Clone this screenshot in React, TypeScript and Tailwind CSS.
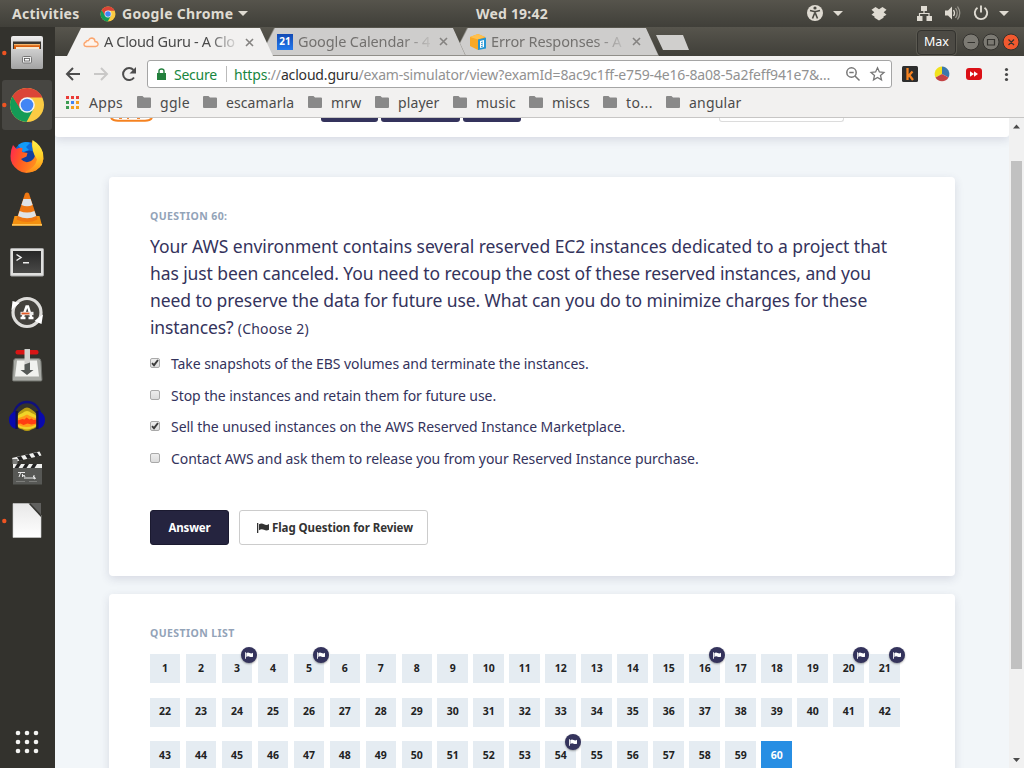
import React from "react";

function ChromeLogo({ cx, cy, r }: { cx: number; cy: number; r: number }) {
  return (
    <g transform={`translate(${cx} ${cy}) scale(${r / 17})`}>
      <circle r="17" fill="#fbcb43" />
      <path d="M0 0 L-14.7 -8.5 A17 17 0 0 1 15.4 -7.5 L0 -7.5 Z" fill="#db4437" />
      <path d="M-14.7 -8.5 A17 17 0 0 0 -.5 17 L6.5 4 L-7 3 Z" fill="#149b57" />
      <path d="M-14.7 -8.5 L-7 4 L0 -7.5 Z" fill="#db4437" />
      <path d="M-14.7 -8.5 L-6.5 4.5 L-8 9 L-16 4 Z" fill="#149b57" />
      <circle r="7.8" fill="#f4f4f4" />
      <circle r="6.3" fill="#4285f4" />
    </g>
  );
}

const dockIcons: { name: string; running?: boolean; active?: boolean; art: React.ReactNode }[] = [
  {
    name: "Files",
    running: true,
    art: (
      <g>
        <rect x="11" y="9" width="32" height="33" rx="2" fill="url(#metal)" />
        <rect x="13" y="14.500" width="28" height="8" fill="#3b3630" />
        <path d="M14 17h26v5H14z" fill="#d95f0e" />
        <path d="M14 17h26v1.300H14z" fill="#f3b56b" />
        <path d="M16 20h23v2H16z" fill="#f8e8d0" />
        <path d="M11 22h32v18q0 2-2 2H13q-2 0-2-2z" fill="url(#metal2)" />
        <rect x="22.500" y="29.500" width="9" height="6.500" rx="1" fill="#eee" stroke="#777" />
        <rect x="24.500" y="31.500" width="5" height="2.500" fill="#fff" stroke="#555" strokeWidth=".8" />
      </g>
    ),
  },
  { name: "Google Chrome", running: true, active: true, art: <ChromeLogo cx={27} cy={26} r={17} /> },
  {
    name: "Firefox",
    art: (
      <g transform="translate(0 1)">
        <circle cx="27.500" cy="24" r="14" fill="#0c6ad8" />
        <path d="M21 22q8-6 13-2l2 10-8 8-10-3z" fill="#123f9c" />
        <path d="M18 13q6-5 12-2l-4 4 3 3-6 2z" fill="#129bf5" />
        <path d="M13 13l3.500 4q3-2 6-1l-.5 4 5.500 1-1 3.500-5.500 2.500q4 5 10 2 5-3 4-9-4-6-3-11 7 3 11 12 2 12-7 17-10 6-18 0-8-6-7.500-14 0-6 2.500-11z" fill="url(#fox)" />
        <path d="M32.500 8q8.500 5 10.500 13 2 12-7 17.500-6 3-11 1 10-3 12-12-6-8-4.500-19.500z" fill="url(#foxTail)" />
      </g>
    ),
  },
  {
    name: "VLC",
    art: (
      <g transform="translate(0 -.5)">
        <path d="M14.500 33.500h25l2.500 9.500H12z" fill="#f49010" />
        <path d="M12 41.500h30v1.700H12z" fill="#ffc252" />
        <path d="M25 11q2-2 4 0l8.500 26q-10 5-21 0z" fill="#ee7712" />
        <path d="M23.400 16.500h7.200l2 6q-5.500 2.500-11.200 0z" fill="#dfe3e6" />
        <path d="M19.600 28.500q7.500 3 14.800 0l1.800 5q-9 4.500-18.200 0z" fill="#dfe3e6" />
      </g>
    ),
  },
  {
    name: "Terminal",
    art: (
      <g transform="translate(0 .5)">
        <rect x="10.500" y="13" width="33" height="27.500" rx="1" fill="#e0e0de" stroke="#aaa" />
        <rect x="13" y="15.500" width="28" height="22" fill="url(#term)" />
        <path d="M16.500 19l4.500 3-4.500 3M23 27.200h6" fill="none" stroke="#eee" strokeWidth="1.500" />
      </g>
    ),
  },
  {
    name: "Software Updater",
    art: (
      <g>
        <circle cx="27" cy="25.500" r="14" fill="#44423d" stroke="#deddda" strokeWidth="3.200" />
        <path d="M11.500 23l1-9 7 2-3.500 3zM43 27.500l-1.500 9.500-7-3 3.500-3z" fill="#fff" />
        <path d="M20.500 31h5M28.500 31h5M22.500 31l4-11.500h1.500L31.500 31" fill="none" stroke="#fff" strokeWidth="2.400" />
        <path d="M20.500 26.500h13" stroke="#ededed" strokeWidth="3.400" />
        <path d="M21.500 26.500h8" stroke="#e45b26" strokeWidth="1.800" />
      </g>
    ),
  },
  {
    name: "Transmission",
    art: (
      <g transform="translate(0 -.5)">
        <path d="M16 20h22q3 0 3 3l1 18q0 1.500-1 1.500H13.500q-1 0-1-1.500l1-18q0-3 2.500-3z" fill="#a8aaa5" stroke="#6e706b" />
        <path d="M17 22h20l2 16H15z" fill="#f1f2ef" />
        <rect x="15.500" y="11.500" width="23" height="4.500" rx="2" fill="#d81515" />
        <path d="M24.500 10.500h5.500V28h-5.500z" fill="#d0d1cf" />
        <path d="M24.500 26l5.500-2v7.500h3.500L27 36.500l-6.500-5h4z" fill="#555957" />
      </g>
    ),
  },
  {
    name: "Audacity",
    art: (
      <g>
        <path d="M13.500 26C14 6 40 6 40.500 26" fill="none" stroke="#10107c" strokeWidth="2.400" />
        <path d="M17.500 23q2-3 5-4.500 4.500-4 9 0 3 1.500 5 4.500v13q-3 2-5 2.500-4.500 3-9 0-3-.5-5-2.500z" fill="#b79b12" />
        <path d="M17.500 25q2-2 5-3 4.500-4 9 0 3 1 5 3v10q-3 2-5 2.500-4.500 2-9 0-3-.5-5-2.500z" fill="#f0d428" />
        <path d="M17.500 27.500l5.500-2 4-2 4 2 5.500 2v6l-5 2-4.500.5-5-.5-4.500-2z" fill="#ff9a18" />
        <path d="M17.500 29.500l5-1.500 2 .5 2-2 3 2 2-1 2 1.500 3-.5v4l-5 1-4-1-4 1.500-3-1.500-3 .5z" fill="#ff3d12" />
        <path d="M16 20v18Q9 36 9 29t7-9zM38 20v18q7-2 7-9t-7-9z" fill="#0909ad" />
        <path d="M15.500 20h2.300v18h-2.300zM36.200 20h2.300v18h-2.300z" fill="#111147" />
      </g>
    ),
  },
  {
    name: "Clapper",
    art: (
      <g transform="translate(0 1)">
        <path d="M13 20h29v20.500H13z" fill="#575855" />
        <path d="M12 14L39.500 7.500l2 4L14 18z" fill="#efefed" />
        <path d="M17 12.900l4-1 2.500 4-4 1zM25 11.100l4-1 2.500 4-4 1zM33 9.200l4-1 2.500 4-4 1z" fill="#222" />
        <path d="M13 20h29v4H13z" fill="#efefed" />
        <path d="M17 20h4l-2.500 4h-4zM25 20h4l-2.500 4h-4zM33 20h4l-2.500 4h-4z" fill="#222" />
        <path d="M12.500 15h5v5h-5z" fill="#7c7d7a" />
        <path d="M18 28.500h7M20.500 29l-1.500 4M22.500 30v3l1.500-2 1 2M24 34h11l-2-2M34 31v4l2-1" fill="none" stroke="#e9e9e9" strokeWidth="1" />
        <path d="M16 37.500h9M29 37.500h8" stroke="#7d7e7b" />
      </g>
    ),
  },
  {
    name: "LibreOffice",
    running: true,
    art: (
      <g>
        <path d="M13 8.500h17L41 20v22.500H13z" fill="url(#paper)" stroke="#d0d0d0" strokeWidth=".6" />
        <path d="M30 8h11v12z" fill="#60605e" />
        <path d="M28.500 8.500h2L41 19.500v2.500z" fill="#33332f" />
      </g>
    ),
  },
];

function Dock() {
  return (
    <aside className="flex w-[55px] shrink-0 flex-col justify-between bg-[#33322d]">
      <svg className="absolute h-0 w-0">
        <defs>
          <linearGradient id="metal" x2="0" y2="1"><stop stopColor="#eee" /><stop offset="1" stopColor="#999" /></linearGradient>
          <linearGradient id="metal2" x2="0" y2="1"><stop stopColor="#cfcfcf" /><stop offset="1" stopColor="#a3a3a3" /></linearGradient>
          <linearGradient id="fox" x1="0" y1="0" x2="1" y2=".3"><stop stopColor="#ff2058" /><stop offset=".45" stopColor="#ff5b22" /><stop offset="1" stopColor="#ff9a1e" /></linearGradient>
          <linearGradient id="foxTail" x2="0" y2="1"><stop stopColor="#fff04a" /><stop offset=".5" stopColor="#ffcf28" /><stop offset="1" stopColor="#ff8a1a" /></linearGradient>
          <linearGradient id="term" x2="0" y2="1"><stop stopColor="#272727" /><stop offset="1" stopColor="#4a4a48" /></linearGradient>
          <linearGradient id="paper" x2="0" y2="1"><stop stopColor="#e8e8e8" /><stop offset="1" stopColor="#fff" /></linearGradient>
        </defs>
      </svg>
      <div className="flex flex-col">
        {dockIcons.map((d) => (
          <svg key={d.name} className="h-[52px] w-[55px]" viewBox="0 0 55 52">
            {d.active && <rect x="2" y="1" width="50" height="50" rx="3" fill="#474642" />}
            {d.running && <circle cx="4.300" cy="26" r="2.200" fill="#ee5422" />}
            {d.art}
          </svg>
        ))}
      </div>
      <svg className="h-[52px] w-[55px]" viewBox="0 0 55 52">
        {[17, 26, 35].map((y) => [18, 27, 36].map((x) => <circle key={x + "-" + y} cx={x} cy={y} r="2.300" fill="#f4f4f2" />))}
      </svg>
    </aside>
  );
}

function TopBar() {
  return (
    <header className="flex h-[27px] shrink-0 items-center bg-gradient-to-b from-[#56544c] to-[#403f39] text-[14px] font-bold text-[#dfdbd2]">
      <span className="ml-3 w-[88px] whitespace-nowrap tracking-[0.250px]">Activities</span>
      <svg className="h-4 w-4" viewBox="0 0 16 16"><ChromeLogo cx={8} cy={8} r={7.5} /></svg>
      <span className="ml-[6px] w-[116px] whitespace-nowrap tracking-[0.300px]">Google Chrome</span>
      <svg className="h-[5px] w-[10px]" viewBox="0 0 10 5"><path d="M0 0h10L5 5z" fill="#dfdbd2" /></svg>
      <span className="ml-[228px] w-[76px] whitespace-nowrap tracking-[0.200px]">Wed 19:42</span>
      <svg className="ml-auto h-[27px] w-[224px]" viewBox="800 0 224 27" fill="#dfdbd2">
        <circle cx="815" cy="13" r="8" />
        <circle cx="815" cy="8" r="1.600" fill="#4a4942" />
        <path d="M810 10.500l4 1h2l4-1M815 11v3.500M814.500 13.500l-2 5M815.500 13.500l2 5" fill="none" stroke="#4a4942" strokeWidth="1.600" />
        <path d="M833 11h10l-5 5zM999 11h10l-5 5z" />
        <path d="M875.500 7l3.500 2.200L882.500 7l4 2.700-2.800 2.600 2.800 2.500-3 1.800v1.200l-4.500 2.700-4.500-2.700v-1.200l-3-1.800 2.800-2.500-2.800-2.600z" />
        <path d="M921 6h6v5h-6zM917 16h5.500v5H917zM926.500 16h5.500v5h-5.500z" />
        <path d="M924 10v3.500M919.500 17v-3.500h9.500V17" fill="none" stroke="#dfdbd2" strokeWidth="1.200" />
        <path d="M945 10.500h3l4-4v13l-4-4h-3z" />
        <path d="M953.500 10q2 3 0 6" fill="none" stroke="#dfdbd2" strokeWidth="1.300" />
        <path d="M955.500 8q3.500 5 0 10M957.500 6.500q4.500 6.500 0 13" fill="none" stroke="#99968d" strokeWidth="1.300" />
        <path d="M977.500 7.800a6.200 6.200 0 1 0 7 0M981 5.500v7" fill="none" stroke="#dfdbd2" strokeWidth="1.900" />
      </svg>
    </header>
  );
}

function TabLabel({ icon, label, tracking, dim }: { icon: React.ReactNode; label: string; tracking: string; dim?: boolean }) {
  return (
    <div className="flex h-full items-center pl-[16px]">
      <span className="flex h-4 w-4 items-center justify-center">{icon}</span>
      <span className={`ml-[5px] w-[134px] whitespace-nowrap text-[14.500px] [mask-image:linear-gradient(to_right,black_78%,transparent_102%)] ${tracking} ${dim ? "text-[#73716f]" : "text-[#4b4b4b]"}`}>{label}</span>
      <svg className="ml-[7px] h-[9px] w-[9px]" viewBox="0 0 9 9"><path d="M1 1l7 7M8 1L1 8" stroke="#858381" strokeWidth="1.600" /></svg>
    </div>
  );
}

function TabStrip() {
  return (
    <div className="flex h-[29px] bg-gradient-to-b from-[#57554d] to-[#403f39] pl-[12px] pt-px">
      <div className="relative z-20 h-[28px] w-[206px] bg-[#f2f1f0] [clip-path:polygon(14px_0,193px_0,206px_100%,0_100%)]">
        <TabLabel tracking="tracking-[-0.350px]" label="A Cloud Guru - A Clo" icon={
          <svg className="h-4 w-4" viewBox="0 0 16 16"><path d="M3.500 12.500h9q3-.5 2.500-3-.5-2-3-2 0-3-3-3.500-2.500 0-3.500 2.500Q3 6.500 3 8 .800 8.500 1 11q.5 1.500 2.500 1.500z" fill="#fff4ec" stroke="#fba66f" strokeWidth="1.300" /></svg>} />
      </div>
      <div className="relative z-10 -ml-[13px] h-[28px] w-[206px] bg-[#908e89] [clip-path:polygon(14px_0,193px_0,206px_100%,0_100%)]">
        <div className="ml-px h-[27px] w-[204px] bg-[#cecdcc] [clip-path:polygon(14px_0,192px_0,204px_100%,0_100%)]">
          <TabLabel dim tracking="tracking-[-0.120px]" label="Google Calendar - 4" icon={
            <span className="flex h-4 w-4 items-center justify-center bg-gradient-to-b from-[#124ab5] to-[#2479ed] text-[10px] font-bold text-white">21</span>} />
        </div>
      </div>
      <div className="-ml-[13px] h-[28px] w-[206px] bg-[#908e89] [clip-path:polygon(14px_0,193px_0,206px_100%,0_100%)]">
        <div className="ml-px h-[27px] w-[204px] bg-[#cecdcc] [clip-path:polygon(14px_0,192px_0,204px_100%,0_100%)]">
          <TabLabel dim tracking="tracking-[-0.120px]" label="Error Responses - A" icon={
            <svg className="h-4 w-4" viewBox="0 0 16 16"><path d="M0 3l8-3 7 3v9l-7 4-8-4z" fill="#f9a825" /><path d="M0 3l8 2.500L15 3 8 0z" fill="#ffc04d" /><path d="M8 5.500l8-2v11L8 16z" fill="#2595d3" /><path d="M10 7l4-1v7l-4 1z" fill="#fff" /><path d="M11 8.500l2-.5M11 10.500l2-.5M11 12.500l2-.5" stroke="#2595d3" /></svg>} />
        </div>
      </div>
      <div className="-ml-[3px] mt-[7px] h-[15px] w-[33px] bg-[#d0cfcd] [clip-path:polygon(0_0,27px_0,33px_100%,7px_100%)]" />
      <div className="ml-auto mr-[4px] flex h-[28px] items-center">
        <span className="mr-[6px] mt-px flex h-[25px] w-[39px] items-center justify-center rounded-[4px] border border-[#33322e] bg-[#4c4a44] text-[12.500px] text-white shadow-[0_0_0_1px_#5b5951]">Max</span>
        <svg className="h-[20px] w-[58px]" viewBox="0 0 58 20">
          <g stroke="#33322e"><circle cx="9" cy="10" r="8" fill="#7c7a73" /><circle cx="29" cy="10" r="8" fill="#7c7a73" /><circle cx="49" cy="10" r="8" fill="#f1592f" /></g>
          <path d="M5.500 10.500h7.500M25.500 7.500h7v5.500h-7zM46.500 7.500l5.500 5.500M52 7.500L46.500 13" fill="none" stroke="#34332f" strokeWidth="1.200" />
        </svg>
      </div>
    </div>
  );
}

function Toolbar() {
  return (
    <div className="flex h-[36px] items-center bg-[#f2f1f0] pl-[10px]">
      <svg className="h-[20px] w-[74px]" viewBox="0 0 74 20" fill="none" strokeWidth="2">
        <path d="M15 10H2M8 4l-6 6 6 6" stroke="#4d4d4d" />
        <path d="M29 10h13M36 4l6 6-6 6" stroke="#c9c8c7" />
        <path d="M69 13.500a6 6 0 1 1-.5-7.500" stroke="#4d4d4d" />
        <path d="M71 3v6.500h-6.500z" fill="#4d4d4d" />
      </svg>
      <div className="ml-[8px] flex h-[28px] w-[745px] items-center rounded-[3px] border border-[#a5a5a5] bg-white">
        <svg className="ml-[9px] h-[12px] w-[9px]" viewBox="0 0 9 12"><path d="M0 5h9v7H0z" fill="#23803d" /><path d="M2 5V3q0-2 2.500-2T7 3v2" fill="none" stroke="#23803d" strokeWidth="1.400" /></svg>
        <span className="ml-[8px] w-[52px] whitespace-nowrap text-[14px] tracking-[-0.250px] text-[#178640]">Secure</span>
        <span className="h-4 w-px bg-[#bbb]" />
        <span className="ml-[7px] w-[611px] whitespace-nowrap text-[14px] tracking-[-0.170px] text-[#929292]"><span className="text-[#178640]">https</span>://<span className="text-[#303030]">acloud.guru</span>/exam-simulator/view?examId=8ac9c1ff-e759-4e16-8a08-5a2feff941e7&amp;…</span>
        <svg className="h-[16px] w-[42px]" viewBox="0 0 42 16" fill="none" stroke="#777" strokeWidth="1.500">
          <circle cx="6.500" cy="6.500" r="4.700" /><path d="M4.300 6.500h4.400M10 10l4.500 4.500" />
          <path d="M32.500 1.800l1.900 4.200 4.500.4-3.400 3 1 4.500-4-2.400-4 2.400 1-4.500-3.400-3 4.500-.4z" strokeWidth="1.300" />
        </svg>
      </div>
      <svg className="ml-[8px] h-[20px] w-[116px]" viewBox="900 64 116 20">
        <rect x="902" y="66" width="16" height="16" rx="1.500" fill="#2d2d2d" />
        <path d="M907.500 68v12M908 76.500l4.500-5M909.500 75.500l3.500 4.500" fill="none" stroke="#f58220" strokeWidth="2.300" />
        <path d="M942 74l0-7.500a7.500 7.500 0 0 0-6.500 11z" fill="#f1e21d" /><path d="M942 74v-7.500a7.500 7.500 0 0 1 6.500 11z" fill="#3b78ac" /><path d="M942 74l6.500 3.500a7.500 7.500 0 0 1-13 0z" fill="#c44346" />
        <rect x="966" y="68" width="16" height="12" rx="3" fill="#db1016" /><path d="M970 71.200l4 2.800-4 2.800zM974 71.200l4 2.800-4 2.800z" fill="#fff" />
        <circle cx="1006.500" cy="69.500" r="1.600" fill="#484848" /><circle cx="1006.500" cy="74.500" r="1.600" fill="#484848" /><circle cx="1006.500" cy="79.500" r="1.600" fill="#484848" />
      </svg>
    </div>
  );
}

const bookmarks = [
  { label: "ggle", w: "w-[43px] tracking-[0.300px]" },
  { label: "escamarla", w: "w-[82px] tracking-[0.100px]" },
  { label: "mrw", w: "w-[44px] tracking-[0.200px]" },
  { label: "player", w: "w-[55px] tracking-[0.100px]" },
  { label: "music", w: "w-[53px] tracking-[0.250px]" },
  { label: "miscs", w: "w-[51px] tracking-[0.200px]" },
  { label: "to...", w: "w-[40px] tracking-[0.400px]" },
  { label: "angular", w: "w-[60px] tracking-[0.200px]" },
];

function BookmarksBar() {
  const colors = ["#ea3b37", "#ea3b37", "#ea3b37", "#3d9b52", "#4285f4", "#f4a020", "#3d9b52", "#f4a020", "#f4a020"];
  return (
    <div className="flex h-[26px] items-center border-b border-[#c7c6c5] bg-[#f2f1f0] pb-[5px] pl-[11px] text-[14px] text-[#4b4b4b]">
      <svg className="h-[13px] w-[13px]" viewBox="0 0 13 13">
        {colors.map((c, i) => <rect key={i} x={(i % 3) * 5} y={Math.floor(i / 3) * 5} width="3" height="3" fill={c} />)}
      </svg>
      <span className="ml-[10px] w-[48px] whitespace-nowrap tracking-[0.300px]">Apps</span>
      {bookmarks.map((b) => (
        <span key={b.label} className="flex items-center">
          <svg className="h-[12px] w-[14px]" viewBox="0 0 14 12"><path d="M1 0h4.500L7 1.500h6q1 0 1 1V11q0 1-1 1H1q-1 0-1-1V1q0-1 1-1z" fill="#898989" /></svg>
          <span className={`ml-[9px] whitespace-nowrap ${b.w}`}>{b.label}</span>
        </span>
      ))}
    </div>
  );
}

function Flag({ className }: { className: string }) {
  return (
    <svg className={className} viewBox="0 0 12 10" fill="currentColor">
      <path d="M0 0h1.300v10H0zM2 1.200Q4.500-.300 7 1.200t5-.2v5.800Q9.500 8 7 6.800T2 7.300z" />
    </svg>
  );
}

const options = [
  { text: "Take snapshots of the EBS volumes and terminate the instances.", on: true, row: "h-[32px] tracking-[-0.075px]" },
  { text: "Stop the instances and retain them for future use.", on: false, row: "h-[31px] tracking-[-0.045px]" },
  { text: "Sell the unused instances on the AWS Reserved Instance Marketplace.", on: true, row: "h-[32px] tracking-[-0.060px]" },
  { text: "Contact AWS and ask them to release you from your Reserved Instance purchase.", on: false, row: "h-[31px] tracking-[-0.078px]" },
];

const flagged = [3, 5, 16, 20, 21, 54];

function ExamPage() {
  return (
    <div className="flex min-h-0 flex-1">
      <main className="flex min-w-0 flex-1 flex-col overflow-hidden bg-[#f2f6f9]">
        <div className="flex h-[19px] shrink-0 items-start rounded-b-[3px] bg-white shadow-[0_3px_10px_rgba(50,50,93,0.14)]">
          <svg className="ml-[55px] h-[4px] w-[43px]" viewBox="0 0 43 4"><path d="M1 0q2 2.800 7 2.800h27q5 0 7-2.800" fill="none" stroke="#f58220" strokeWidth="2" /><path d="M9 .5h3M17 .5h2M27 .5h3" stroke="#f58732" /></svg>
          <div className="ml-[168px] h-[4px] w-[57px] rounded-b-[3px] bg-[#34335c]" />
          <div className="ml-[3px] h-[4px] w-[79px] rounded-b-[3px] bg-[#34335c]" />
          <div className="ml-[3px] h-[4px] w-[58px] rounded-b-[3px] bg-[#34335c]" />
          <div className="ml-[198px] h-[4px] w-[125px] rounded-b-[3px] border border-t-0 border-[#dcdcdc]" />
        </div>
        <section className="ml-[54px] mt-[40px] h-[399px] w-[846px] shrink-0 rounded-[4px] bg-white px-[41px] pt-[30px] text-[#34335c] shadow-[0_3px_10px_rgba(50,50,93,0.14)]">
          <h2 className="h-[18px] whitespace-nowrap text-[10.500px] font-bold leading-[18px] tracking-[0.400px] text-[#93a3b8]">QUESTION 60:</h2>
          <div className="mt-[8px] whitespace-nowrap text-[17.500px] leading-[27px]">
            <p className="tracking-[-0.036px]">Your AWS environment contains several reserved EC2 instances dedicated to a project that</p>
            <p className="tracking-[-0.100px]">has just been canceled. You need to recoup the cost of these reserved instances, and you</p>
            <p className="tracking-[-0.090px]">need to preserve the data for future use. What can you do to minimize charges for these</p>
            <p className="tracking-[-0.150px]">instances? <span className="text-[14px] tracking-[0.200px]">(Choose 2)</span></p>
          </div>
          <div className="mt-[6px] flex flex-col text-[14px]">
            {options.map((o) => (
              <label key={o.text} className={`flex items-start whitespace-nowrap leading-[32px] ${o.row}`}>
                <span className="mt-[10px] flex h-[10px] w-[10px] items-center justify-center rounded-[2px] border border-[#a9a9a9] bg-gradient-to-b from-[#ededed] to-[#dcdcdc]">
                  {o.on && <svg className="h-[8px] w-[8px]" viewBox="0 0 8 8"><path d="M1 4.200l2 2L7 1" fill="none" stroke="#3b3b3b" strokeWidth="1.900" /></svg>}
                </span>
                <span className="ml-[11px]">{o.text}</span>
              </label>
            ))}
          </div>
          <div className="mt-[36px] flex gap-[10px] text-[11.500px] font-bold">
            <button className="h-[35px] w-[79px] rounded-[3px] border border-[#1b1a30] bg-[#25243f] tracking-[-0.200px] text-white">Answer</button>
            <button className="flex h-[35px] w-[189px] items-center whitespace-nowrap rounded-[3px] border border-[#ccc] bg-white pl-[17px] tracking-[-0.070px] text-[#333]">
              <Flag className="mr-[3px] h-[10px] w-[12px]" />Flag Question for Review
            </button>
          </div>
        </section>
        <section className="ml-[54px] mt-[18px] h-[260px] w-[846px] shrink-0 rounded-[4px] bg-white px-[41px] pt-[30px] shadow-[0_3px_10px_rgba(50,50,93,0.14)]">
          <h2 className="h-[18px] whitespace-nowrap text-[10.500px] font-bold leading-[18px] tracking-[0.400px] text-[#93a3b8]">QUESTION LIST</h2>
          <div className="-ml-[0.400px] mt-[12px] grid grid-cols-[repeat(21,30.700px)] gap-x-[5.300px] gap-y-[14.500px]">
            {Array.from({ length: 60 }, (_, i) => i + 1).map((n) => (
              <div key={n} className={`relative flex h-[29px] items-center justify-center text-[10.500px] font-bold ${n === 60 ? "bg-[#278ee3] text-white" : "bg-[#e5ecf2] text-[#222]"}`}>
                {n}
                {flagged.includes(n) && (
                  <span className="absolute -right-[5px] -top-[7px] flex h-4 w-4 items-center justify-center rounded-full bg-[#34335c] text-white shadow-[0_1px_2px_rgba(0,0,0,0.35)]">
                    <Flag className="h-[7px] w-[8px]" />
                  </span>
                )}
              </div>
            ))}
          </div>
        </section>
      </main>
      <div className="flex w-[15px] shrink-0 flex-col items-center bg-[#f1f1f1]">
        <svg className="h-[17px] w-[15px]" viewBox="0 0 15 17"><path d="M4 10.500h7L7.500 6.500z" fill="#4b4b4b" /></svg>
        <div className="mt-[26px] h-[508px] w-[11px] bg-[#c1c1c1]" />
        <svg className="mt-auto h-[17px] w-[15px]" viewBox="0 0 15 17"><path d="M4 7h7l-3.500 4z" fill="#4b4b4b" /></svg>
      </div>
    </div>
  );
}

export default function App() {
  return (
    <div className="flex h-[768px] w-[1024px] flex-col overflow-hidden font-['Noto_Sans','Open_Sans',sans-serif]">
      <TopBar />
      <div className="flex min-h-0 flex-1">
        <Dock />
        <div className="flex min-w-0 flex-1 flex-col">
          <TabStrip />
          <Toolbar />
          <BookmarksBar />
          <ExamPage />
        </div>
      </div>
    </div>
  );
}
